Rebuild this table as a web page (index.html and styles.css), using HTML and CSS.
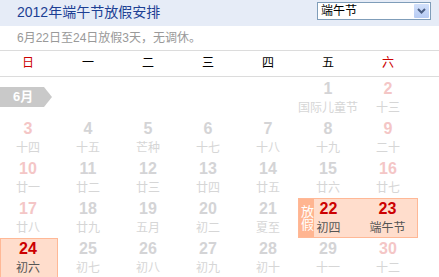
FILE: index.html
```html
<!DOCTYPE html>
<html lang="zh-CN">
<head>
<meta charset="utf-8">
<title>2012年端午节放假安排</title>
<link rel="stylesheet" href="styles.css">
</head>
<body>
<div class="header">
  <h1 class="title">2012年端午节放假安排</h1>
  <div class="select">
    <span class="select-text">端午节</span>
    <span class="select-btn"><svg width="9" height="6" viewBox="0 0 9 6"><path d="M1 1 L4.5 4.5 L8 1" fill="none" stroke="#4a5d82" stroke-width="2"/></svg></span>
  </div>
</div>
<p class="note">6月22日至24日放假3天，无调休。</p>
<div class="weekdays">
  <div class="wd wkend">日</div><div class="wd">一</div><div class="wd">二</div><div class="wd">三</div><div class="wd">四</div><div class="wd">五</div><div class="wd wkend">六</div>
</div>
<div class="month">
  <div class="month-label">6月</div>
  <div class="grid">
    <div class="cell"></div><div class="cell"></div><div class="cell"></div><div class="cell"></div><div class="cell"></div>
    <div class="cell"><div class="num">1</div><div class="lunar">国际儿童节</div></div>
    <div class="cell we"><div class="num">2</div><div class="lunar">十三</div></div>

    <div class="cell we"><div class="num">3</div><div class="lunar">十四</div></div>
    <div class="cell"><div class="num">4</div><div class="lunar">十五</div></div>
    <div class="cell"><div class="num">5</div><div class="lunar">芒种</div></div>
    <div class="cell"><div class="num">6</div><div class="lunar">十七</div></div>
    <div class="cell"><div class="num">7</div><div class="lunar">十八</div></div>
    <div class="cell"><div class="num">8</div><div class="lunar">十九</div></div>
    <div class="cell we"><div class="num">9</div><div class="lunar">二十</div></div>

    <div class="cell we"><div class="num">10</div><div class="lunar">廿一</div></div>
    <div class="cell"><div class="num">11</div><div class="lunar">廿二</div></div>
    <div class="cell"><div class="num">12</div><div class="lunar">廿三</div></div>
    <div class="cell"><div class="num">13</div><div class="lunar">廿四</div></div>
    <div class="cell"><div class="num">14</div><div class="lunar">廿五</div></div>
    <div class="cell"><div class="num">15</div><div class="lunar">廿六</div></div>
    <div class="cell we"><div class="num">16</div><div class="lunar">廿七</div></div>

    <div class="cell we"><div class="num">17</div><div class="lunar">廿八</div></div>
    <div class="cell"><div class="num">18</div><div class="lunar">廿九</div></div>
    <div class="cell"><div class="num">19</div><div class="lunar">五月</div></div>
    <div class="cell"><div class="num">20</div><div class="lunar">初二</div></div>
    <div class="cell"><div class="num">21</div><div class="lunar">夏至</div></div>
    <div class="cell hol hol-start"><span class="hol-tag">放假</span><div class="num">22</div><div class="lunar">初四</div></div>
    <div class="cell hol hol-end"><div class="num">23</div><div class="lunar">端午节</div></div>

    <div class="cell hol hol-single"><div class="num">24</div><div class="lunar">初六</div></div>
    <div class="cell"><div class="num">25</div><div class="lunar">初七</div></div>
    <div class="cell"><div class="num">26</div><div class="lunar">初八</div></div>
    <div class="cell"><div class="num">27</div><div class="lunar">初九</div></div>
    <div class="cell"><div class="num">28</div><div class="lunar">初十</div></div>
    <div class="cell"><div class="num">29</div><div class="lunar">十一</div></div>
    <div class="cell we"><div class="num">30</div><div class="lunar">十二</div></div>
  </div>
</div>
</body>
</html>
```

FILE: styles.css
```css
html, body {
  margin: 0;
  padding: 0;
  background: #ffffff;
  overflow: hidden;
}
body {
  width: 439px;
  height: 277px;
  font-family: "Liberation Sans", "Noto Sans CJK SC", sans-serif;
  color: #000;
}
.header {
  height: 26px;
  background: #e6ecf7;
  display: flex;
  justify-content: space-between;
  align-items: flex-start;
  padding: 0 8px 0 17px;
}
.title {
  margin: 0;
  font-size: 14px;
  font-weight: normal;
  line-height: 24px;
  color: #1c3f94;
}
.select {
  margin-top: 2px;
  width: 114px;
  height: 18px;
  box-sizing: border-box;
  border: 1px solid #7f9db9;
  background: #fff;
  display: flex;
  align-items: center;
  justify-content: space-between;
  padding-left: 3px;
}
.select-text {
  font-size: 12px;
  line-height: 16px;
}
.select-btn {
  width: 15px;
  height: 14px;
  margin-right: 1px;
  background: linear-gradient(#d2e0fb, #b7cbf3);
  border-radius: 1px;
  display: flex;
  align-items: center;
  justify-content: center;
}
.note {
  margin: 0;
  height: 24px;
  line-height: 24px;
  padding-left: 17px;
  font-size: 12px;
  color: #999;
}
.weekdays {
  border-top: 1px solid #dcdcdc;
  border-bottom: 1px solid #dcdcdc;
  height: 25px;
  display: grid;
  grid-template-columns: repeat(7, 60px);
  margin-left: 0;
  padding-left: 0;
}
.weekdays, .grid {
  width: 420px;
  position: relative;
}
.weekdays {
  width: 439px;
  box-sizing: content-box;
  padding-right: 0;
}
.wd {
  font-size: 12px;
  line-height: 25px;
  text-align: center;
  transform: translateX(-2px);
}
.wkend {
  color: #cc0000;
}
.month {
  position: relative;
  margin-top: 1px;
}
.month-label {
  position: absolute;
  left: 0;
  top: 9px;
  width: 44px;
  height: 20px;
  background: #c9c9c9;
  color: #fff;
  font-weight: bold;
  font-size: 13px;
  line-height: 20px;
  padding-left: 13px;
  box-sizing: border-box;
  z-index: 1;
}
.month-label::after {
  content: "";
  position: absolute;
  left: 44px;
  top: 0;
  border-left: 8px solid #c9c9c9;
  border-top: 10px solid transparent;
  border-bottom: 10px solid transparent;
}
.grid {
  display: grid;
  grid-template-columns: repeat(7, 60px);
  grid-auto-rows: 40px;
  margin-left: -2px;
}
.cell {
  position: relative;
  box-sizing: border-box;
  text-align: center;
  padding-top: 2px;
}
.num {
  font-size: 16px;
  font-weight: bold;
  line-height: 18px;
  color: #d4d4d6;
  margin-bottom: 2px;
}
.lunar {
  font-size: 12px;
  line-height: 16px;
  color: #d6d6d6;
}
.we .num {
  color: #f4c6c6;
}
.hol {
  background: #ffddcc;
  border-top: 1px solid #ffb896;
  border-bottom: 1px solid #ffb896;
  padding-top: 1px;
}
.hol .num {
  color: #cc0000;
}
.hol .lunar {
  color: #555;
}
.hol-start {
  border-left: 1px solid #ffb896;
}
.hol-end {
  border-right: 1px solid #ffb896;
}
.hol-single {
  border: 1px solid #ffb896;
  margin-left: 2px;
}
.hol-single .num, .hol-single .lunar {
  transform: translateX(-1px);
}
.hol-tag {
  position: absolute;
  left: 0;
  top: 0;
  bottom: 0;
  width: 15px;
  background: #ffb591;
  color: #fff;
  font-size: 13px;
  line-height: 15px;
  display: flex;
  align-items: center;
  justify-content: center;
  writing-mode: vertical-rl;
  text-orientation: upright;
}
```
